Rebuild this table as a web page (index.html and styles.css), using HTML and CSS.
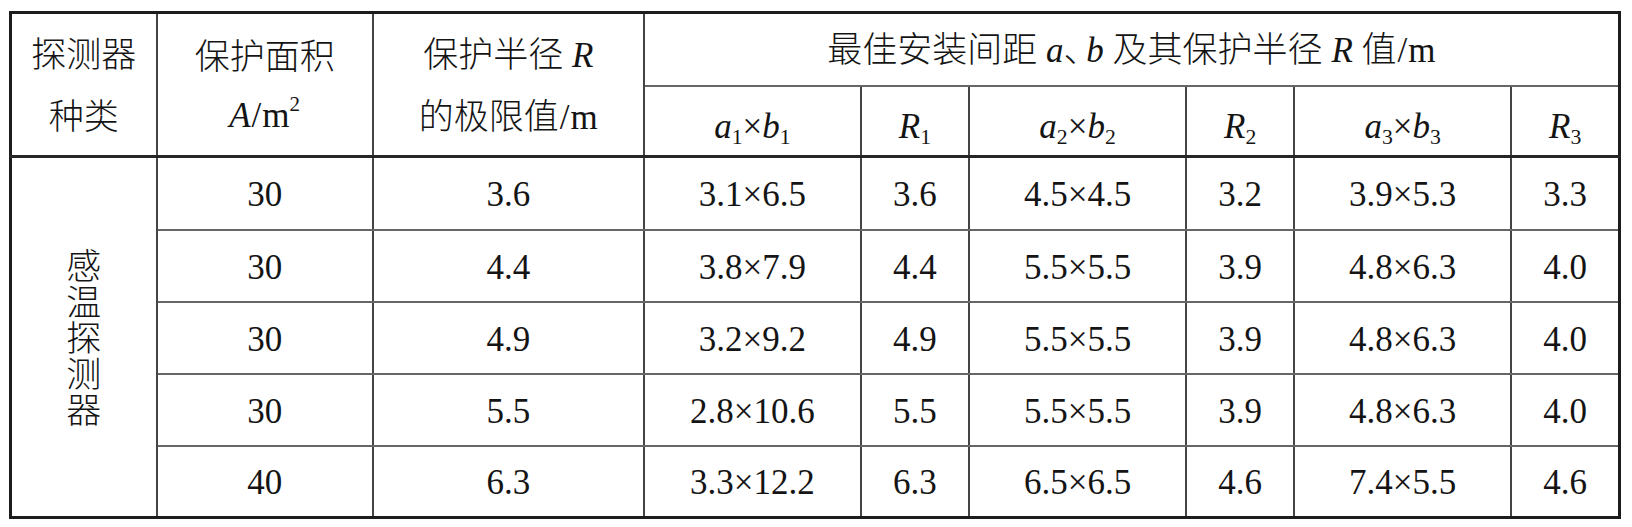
FILE: index.html
```html
<!DOCTYPE html>
<html lang="zh">
<head>
<meta charset="utf-8">
<title>感温探测器保护面积与安装间距</title>
<link rel="stylesheet" href="styles.css">
</head>
<body>
<table class="spec">
  <colgroup>
    <col class="c-type">
    <col class="c-area">
    <col class="c-rad">
    <col class="c-ab">
    <col class="c-r">
    <col class="c-ab">
    <col class="c-r">
    <col class="c-ab">
    <col class="c-r">
  </colgroup>
  <thead>
    <tr class="h1">
      <th rowspan="2" class="two-line"><span class="zh">探测器</span><br><span class="zh">种类</span></th>
      <th rowspan="2" class="two-line"><span class="zh">保护面积</span><br><i>A</i><span class="sl">/</span>m<sup>2</sup></th>
      <th rowspan="2" class="two-line"><span class="zh">保护半径</span> <i>R</i><br><span class="zh">的极限值</span><span class="sl">/</span>m</th>
      <th colspan="6"><span class="zh">最佳安装间距</span> <i>a</i><span class="zh dun">、</span><i>b</i> <span class="zh">及其保护半径</span> <i>R</i> <span class="zh">值</span><span class="sl">/</span>m</th>
    </tr>
    <tr class="h2">
      <th><i>a</i><sub>1</sub>×<i>b</i><sub>1</sub></th>
      <th><i>R</i><sub>1</sub></th>
      <th><i>a</i><sub>2</sub>×<i>b</i><sub>2</sub></th>
      <th><i>R</i><sub>2</sub></th>
      <th><i>a</i><sub>3</sub>×<i>b</i><sub>3</sub></th>
      <th><i>R</i><sub>3</sub></th>
    </tr>
  </thead>
  <tbody>
    <tr class="r1">
      <td rowspan="5" class="kind"><span class="vert zh">感温探测器</span></td>
      <td>30</td><td>3.6</td><td>3.1×6.5</td><td>3.6</td><td>4.5×4.5</td><td>3.2</td><td>3.9×5.3</td><td>3.3</td>
    </tr>
    <tr>
      <td>30</td><td>4.4</td><td>3.8×7.9</td><td>4.4</td><td>5.5×5.5</td><td>3.9</td><td>4.8×6.3</td><td>4.0</td>
    </tr>
    <tr>
      <td>30</td><td>4.9</td><td>3.2×9.2</td><td>4.9</td><td>5.5×5.5</td><td>3.9</td><td>4.8×6.3</td><td>4.0</td>
    </tr>
    <tr>
      <td>30</td><td>5.5</td><td>2.8×10.6</td><td>5.5</td><td>5.5×5.5</td><td>3.9</td><td>4.8×6.3</td><td>4.0</td>
    </tr>
    <tr>
      <td>40</td><td>6.3</td><td>3.3×12.2</td><td>6.3</td><td>6.5×6.5</td><td>4.6</td><td>7.4×5.5</td><td>4.6</td>
    </tr>
  </tbody>
</table>
</body>
</html>
```

FILE: styles.css
```css
html, body {
  margin: 0;
  padding: 0;
  background: #ffffff;
}

body {
  padding: 11px 0 0 9px;
}

.spec {
  border-collapse: collapse;
  table-layout: fixed;
  width: 1612px;
  border: 3px solid #1c1c1c;
  font-family: "Liberation Serif", "Times New Roman", "DejaVu Serif", serif;
  font-size: 35px;
  color: #141414;
}

.c-type { width: 146px; }
.c-area { width: 216px; }
.c-rad  { width: 271px; }
.c-ab   { width: 217px; }
.c-r    { width: 108px; }

.spec th,
.spec td {
  padding: 0;
  text-align: center;
  vertical-align: middle;
  font-weight: normal;
  font-family: "Liberation Serif", "Times New Roman", "DejaVu Serif", serif;
  border-left: 2px solid #444444;
  border-right: 2px solid #444444;
  border-top: 2px solid #666666;
  border-bottom: 2px solid #666666;
  line-height: 1.2;
}

.spec td {
  padding-top: 4px;
}

.spec thead .h2 th {
  padding-top: 12px;
}

.spec thead .h2 th,
.spec thead th[rowspan] {
  border-bottom: 3px solid #262626;
}

.h1 { height: 73px; }
.h2 { height: 71px; }
.spec tbody tr { height: 72px; }
.spec tbody tr.r1 { height: 73px; }

.spec .two-line {
  line-height: 58px;
}

.spec .zh {
  font-family: "Noto Sans CJK SC", sans-serif;
  font-weight: 300;
}

.spec .dun {
  letter-spacing: -0.35em;
}

.spec .sl {
  font-family: "Liberation Serif", "Times New Roman", serif;
  padding: 0 1px;
}

.spec i {
  font-style: italic;
  font-family: "Liberation Serif", "Times New Roman", serif;
}

.spec sub {
  font-size: 0.62em;
  vertical-align: -0.28em;
  line-height: 0;
}

.spec sup {
  font-size: 0.6em;
  vertical-align: 0.75em;
  line-height: 0;
}

.spec .kind {
  padding-top: 12px;
}

.spec .vert {
  display: inline-block;
  writing-mode: vertical-rl;
  text-orientation: upright;
  line-height: 1;
  font-size: 35px;
  letter-spacing: 1px;
}
```
